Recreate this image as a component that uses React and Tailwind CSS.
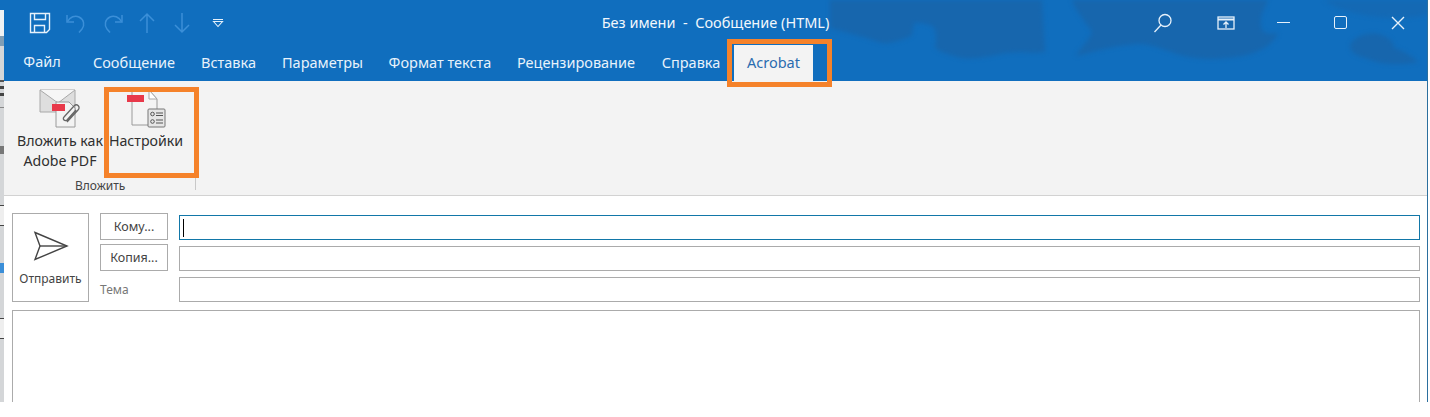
import React from 'react'

const font = { fontFamily: '"Noto Sans", "Open Sans", sans-serif' }

const tabs = [
  { name: 'Файл', cls: 'w-[36px] mr-[33px] -translate-y-[1px]' },
  { name: 'Сообщение', cls: 'w-[82px] mr-[27px]' },
  { name: 'Вставка', cls: 'w-[53px] mr-[27px]' },
  { name: 'Параметры', cls: 'w-[81px] mr-[27px]' },
  { name: 'Формат текста', cls: 'w-[100px] mr-[27px]' },
  { name: 'Рецензирование', cls: 'w-[118px] mr-[27px]' },
  { name: 'Справка', cls: 'w-[58px] mr-[14px]' },
]

const SaveIcon = () => (
  <svg width="22" height="22" viewBox="0 0 22 22" fill="none" stroke="#e6f1fb" strokeWidth="1.4">
    <path d="M1.5 1.5h19v16l-3 3h-16z" />
    <path d="M5.5 1.5v6h11v-6" />
    <path d="M5.5 20.5v-7h10v7" />
  </svg>
)

const QuickAccess = () => (
  <div className="flex items-center">
    <div className="ml-[25px] mr-[14px]"><SaveIcon /></div>
    <svg width="22" height="22" viewBox="0 0 22 22" fill="none" stroke="#3b8fd8" strokeWidth="1.5" className="mr-[15px]">
      <path d="M2 3v7h7" />
      <path d="M2.500 9.500C5 5 10 3 14 5c5 2.500 6 8 3 12l-3 3.500" />
    </svg>
    <svg width="22" height="22" viewBox="0 0 22 22" fill="none" stroke="#3b8fd8" strokeWidth="1.5" className="mr-[14px]">
      <path d="M20 3v7h-7" />
      <path d="M19.500 9.500C17 5 12 3 8 5c-5 2.500-6 8-3 12l3 3.500" />
    </svg>
    <svg width="18" height="22" viewBox="0 0 18 22" fill="none" stroke="#3b8fd8" strokeWidth="1.5" className="mr-[17px]">
      <path d="M9 21V2M2 9l7-7 7 7" />
    </svg>
    <svg width="18" height="22" viewBox="0 0 18 22" fill="none" stroke="#3b8fd8" strokeWidth="1.5" className="mr-[21px]">
      <path d="M9 1v19M2 13l7 7 7-7" />
    </svg>
    <svg width="12" height="10" viewBox="0 0 12 10" fill="none" stroke="#e6f1fb" strokeWidth="1.1">
      <path d="M1 1.500h10M1.500 3.500L6 8.500l4.500-5z" />
    </svg>
  </div>
)

const WindowButtons = () => (
  <div className="flex items-center mr-[22px]">
    <svg width="20" height="20" viewBox="0 0 20 20" fill="none" stroke="#e6f1fb" strokeWidth="1.3" className="mr-[44px]">
      <circle cx="12" cy="7.500" r="6" />
      <path d="M8 12l-6.500 7" />
    </svg>
    <svg width="18" height="14" viewBox="0 0 18 14" fill="none" stroke="#e6f1fb" strokeWidth="1.3" className="mr-[42px]">
      <rect x="1" y="1" width="16" height="12" />
      <path d="M1 3.500h16" strokeWidth="2" />
      <path d="M9 12V6M6.500 8.500L9 6l2.500 2.500" />
    </svg>
    <div className="w-[13px] h-[1.500px] bg-[#e6f1fb] mr-[44px]" />
    <div className="w-[13px] h-[13px] border-[1.500px] border-[#e6f1fb] rounded-[2px] mr-[44px]" />
    <svg width="14" height="14" viewBox="0 0 14 14" fill="none" stroke="#e6f1fb" strokeWidth="1.4">
      <path d="M1 1l12 12M13 1L1 13" />
    </svg>
  </div>
)

const Clouds = () => (
  <div className="absolute inset-0 overflow-hidden pointer-events-none">
    <svg className="blur-[2px]" width="1424" height="81" viewBox="0 0 1424 81">
      <path fill="#1766ad" d="M826 0h212l3 52c-10 2-22-1-38 1-18 3-34 8-50 4-10-3-20-6-22-10 2-6 1-14-1-20-6-4-16-5-20-4l-2 12c-8 5-22 9-30 8-12-4-32-10-52-15z" />
      <path fill="#1766ad" d="M1068 0h196c-4 10-10 18-6 30 4 5 12 4 16 3-4 10-18 20-36 23-22 4-44 4-62-1-18-6-34-14-52-10-18 2-32 6-52 11 4-8 12-14 16-24-6-10-16-20-20-32z" />
      <path fill="#1766ad" d="M1346 46c2-8 16-14 28-12 10 2 16 8 16 14 8 2 18 8 24 14-20 4-42 2-52-4-10-2-16-6-16-12z" />
      <path fill="#1469b4" d="M1320 0h104v14c-24 8-80 4-104-14z" />
    </svg>
  </div>
)

const AttachIcon = () => (
  <svg width="44" height="42" viewBox="0 0 44 42" fill="none">
    <path d="M2 3h35v22H2z" fill="#dedede" stroke="#a8a8a8" />
    <path d="M2 3l18 13L37 3" fill="#f6f6f6" stroke="#a8a8a8" />
    <path d="M18 15h13l6 6v19H18z" fill="#f3f3f3" stroke="#9a9a9a" />
    <rect x="14" y="17" width="13" height="7" fill="#e8394a" />
    <path d="M29 35l11-12c3-3-1-7-4-4L26 30c-2 2 1 5 3 3l9-10" stroke="#666" strokeWidth="1.300" />
  </svg>
)

const SettingsIcon = () => (
  <svg width="44" height="42" viewBox="0 0 44 42" fill="none">
    <path d="M7 3h17l8 9v26H7z" fill="#f4f4f4" stroke="#9a9a9a" />
    <path d="M24 3v9h8z" fill="#fff" stroke="#a8a8a8" />
    <rect x="2" y="8" width="17" height="7" fill="#e8394a" />
    <rect x="23" y="22" width="17" height="18" rx="1" fill="#e6e6e6" stroke="#777" />
    <circle cx="27.500" cy="27" r="1.800" stroke="#555" />
    <circle cx="27.500" cy="34.500" r="1.800" stroke="#555" />
    <path d="M31 26h7M31 28.500h7M31 33h7M31 36h7" stroke="#555" />
  </svg>
)

const SendIcon = () => (
  <svg width="36" height="30" viewBox="0 0 36 30" fill="none" stroke="#444" strokeWidth="1.400">
    <path d="M2 1.500L34 15 2 28.500 7 15z" />
    <path d="M7 15h27" />
  </svg>
)

const Strip = () => (
  <svg width="4" height="402" viewBox="0 0 4 402" className="shrink-0">
    <rect width="4" height="402" fill="#d4d6d8" />
    <rect width="4" height="10" fill="#106ebe" />
    <rect y="10" width="4" height="26" fill="#eef1f3" />
    <rect y="36" width="4" height="10" fill="#7f9db5" />
    <rect y="80" width="4" height="2" fill="#555" />
    <rect y="86" width="4" height="3" fill="#444" />
    <rect y="93" width="4" height="3" fill="#444" />
    <rect y="107" width="4" height="1" fill="#888" />
    <rect y="146" width="4" height="8" fill="#777" />
    <rect y="205" width="4" height="20" fill="#eee" />
    <rect y="205" width="4" height="1" fill="#444" />
    <rect y="225" width="4" height="1" fill="#444" />
    <rect y="263" width="4" height="10" fill="#3a8ed8" />
    <rect y="318" width="4" height="20" fill="#eee" />
    <rect y="318" width="4" height="1" fill="#444" />
    <rect y="338" width="4" height="1" fill="#444" />
  </svg>
)

export default function App() {
  return (
    <div className="w-[1430px] h-[417px] bg-white overflow-hidden" style={font}>
      <div className="flex w-[1428px] h-[402px]">
        <Strip />
        <div className="flex-1 flex flex-col border-r border-[#2b6f9e] relative">
          {/* title bar + tabs */}
          <div className="h-[81px] bg-[#106ebe] relative shrink-0">
            <Clouds />
            <div className="relative h-[45px] flex items-center justify-between">
              <QuickAccess />
              <div className="absolute left-0 right-0 text-center text-[14.500px] text-[#f2f7fc] whitespace-pre">Без имени  -  Сообщение (HTML)</div>
              <WindowButtons />
            </div>
            <div className="relative h-[36px] flex items-start pl-[20px] text-[14.500px] text-[#e8f2fb] whitespace-nowrap">
              {tabs.map((tab) => (
                <div key={tab.name} className={`${tab.cls} text-center pt-[7px] flex justify-center`}>{tab.name}</div>
              ))}
              <div className="w-[79px] h-[36px] bg-[#f3f3f3] text-[#2b6cb0] text-center pt-[7px]">Acrobat</div>
            </div>
          </div>

          {/* ribbon */}
          <div className="h-[115px] shrink-0 bg-[#f3f3f3] border-b border-[#d2d2d2] flex text-[14.200px] leading-[20px] text-[#2f2f2f]">
            <div className="w-[192px] border-r border-[#c8c8c8] flex flex-col mt-[9px] mb-[5px]">
              <div className="flex flex-1 -mt-[3px]">
                <div className="w-[92px] ml-[10px] flex flex-col items-center whitespace-nowrap">
                  <AttachIcon />
                  <div className="mt-[2px] text-center">Вложить как<br />Adobe PDF</div>
                </div>
                <div className="w-[80px] flex flex-col items-center">
                  <div className="ml-[1px]"><SettingsIcon /></div>
                  <div className="mt-[2px] text-center">Настройки</div>
                </div>
              </div>
              <div className="text-[12px] leading-[16px] text-[#444] pl-[71px] translate-y-[4px]">Вложить</div>
            </div>
          </div>

          {/* message form */}
          <div className="flex-1 bg-white flex flex-col pl-[8px] pr-[7px] pt-[17px] min-h-0">
            <div className="flex h-[89px] shrink-0">
              <div className="w-[77px] border border-[#ababab] flex flex-col items-center pt-[17px] text-[12px] text-[#444]">
                <SendIcon />
                <div className="mt-[9px]">Отправить</div>
              </div>
              <div className="w-[68px] ml-[11px] flex flex-col text-[12.500px] text-[#444]">
                <div className="h-[27px] pt-[2px] border border-[#ababab] flex items-center justify-center">Кому...</div>
                <div className="h-[27px] pt-[2px] mt-[4px] border border-[#ababab] flex items-center justify-center">Копия...</div>
                <div className="mt-[10px] text-[12px] text-[#777]">Тема</div>
              </div>
              <div className="flex-1 ml-[11px] pt-[2px] flex flex-col gap-[6px]">
                <div className="h-[25px] border border-[#1277a8] pl-[3px] flex items-center">
                  <div className="w-[1px] h-[18px] bg-black" />
                </div>
                <div className="h-[25px] border border-[#ababab]" />
                <div className="h-[25px] border border-[#ababab]" />
              </div>
            </div>
            <div className="flex-1 mt-[8px] border border-b-0 border-[#ababab]" />
          </div>

          {/* orange callouts */}
          <div className="absolute left-[723px] top-[39px] w-[105px] h-[48px] border-[5px] border-[#f5822a]" />
          <div className="absolute left-[100px] top-[87px] w-[95px] h-[91px] border-[5px] border-[#f5822a]" />
        </div>
      </div>
    </div>
  )
}
